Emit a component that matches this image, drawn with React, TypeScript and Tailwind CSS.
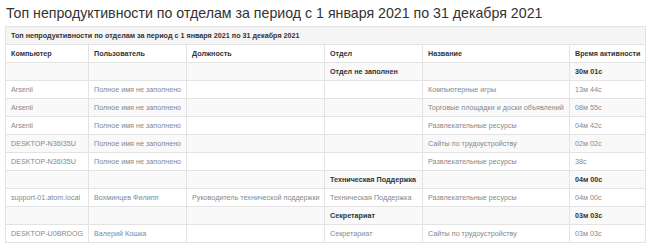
import React from "react";

type Row = { g?: boolean; c: string[] };

const rows: Row[] = [
  { g: true, c: ["", "", "", "Отдел не заполнен", "", "30м 01с"] },
  { c: ["Arsenii", "Полное имя не заполнено", "", "", "Компьютерные игры", "13м 44с"] },
  { c: ["Arsenii", "Полное имя не заполнено", "", "", "Торговые площадки и доски объявлений", "08м 55с"] },
  { c: ["Arsenii", "Полное имя не заполнено", "", "", "Развлекательные ресурсы", "04м 42с"] },
  { c: ["DESKTOP-N36I35U", "Полное имя не заполнено", "", "", "Сайты по трудоустройству", "02м 02с"] },
  { c: ["DESKTOP-N36I35U", "Полное имя не заполнено", "", "", "Развлекательные ресурсы", "38с"] },
  { g: true, c: ["", "", "", "Техническая Поддержка", "", "04м 00с"] },
  { c: ["support-01.atom.local", "Вохминцев Филипп", "Руководитель технической поддержки", "Техническая Поддержка", "Развлекательные ресурсы", "04м 00с"] },
  { g: true, c: ["", "", "", "Секретариат", "", "03м 03с"] },
  { c: ["DESKTOP-U0BRDOG", "Валерий Кошка", "", "Секретариат", "Сайты по трудоустройству", "03м 03с"] },
];

const widths = ["w-[83px]", "w-[98px]", "w-[138px]", "w-[98px]", "w-[147px]", "w-[76px]"];
const headers = ["Компьютер", "Пользователь", "Должность", "Отдел", "Название", "Время активности"];

export default function App() {
  return (
    <div className="w-[650px] h-[248px] bg-white overflow-hidden font-['Liberation_Sans',Arial,sans-serif]">
      <h1 className="text-[14.2px] leading-[16px] text-[#333] font-normal pl-[6px] pt-[5px] h-[26px]">
        Топ непродуктивности по отделам за период с 1 января 2021 по 31 декабря 2021
      </h1>
      <table className="ml-[5px] w-[640px] border-collapse table-fixed text-[7.2px] leading-[10px]">
        <colgroup>
          {widths.map((w, i) => (
            <col key={i} className={w} />
          ))}
        </colgroup>
        <tbody>
          <tr className="h-[18px] bg-[#f5f5f5]">
            <td colSpan={6} className="border border-[#e3e3e3] px-[5px] font-bold text-[#333]">
              Топ непродуктивности по отделам за период с 1 января 2021 по 31 декабря 2021
            </td>
          </tr>
          <tr className="h-[18px] bg-white">
            {headers.map((h, i) => (
              <td key={i} className="border border-[#e3e3e3] px-[5px] font-bold text-[#333] whitespace-nowrap">
                {h}
              </td>
            ))}
          </tr>
          {rows.map((r, ri) => (
            <tr key={ri} className={`h-[18px] ${ri % 2 === 0 ? "bg-[#f9f9f9]" : "bg-white"}`}>
              {r.c.map((t, ci) => (
                <td
                  key={ci}
                  className={`border border-[#e3e3e3] px-[5px] whitespace-nowrap overflow-hidden ${
                    r.g ? "font-bold text-[#333]" : "text-[#888]"
                  }`}
                >
                  {t}
                </td>
              ))}
            </tr>
          ))}
        </tbody>
      </table>
    </div>
  );
}
